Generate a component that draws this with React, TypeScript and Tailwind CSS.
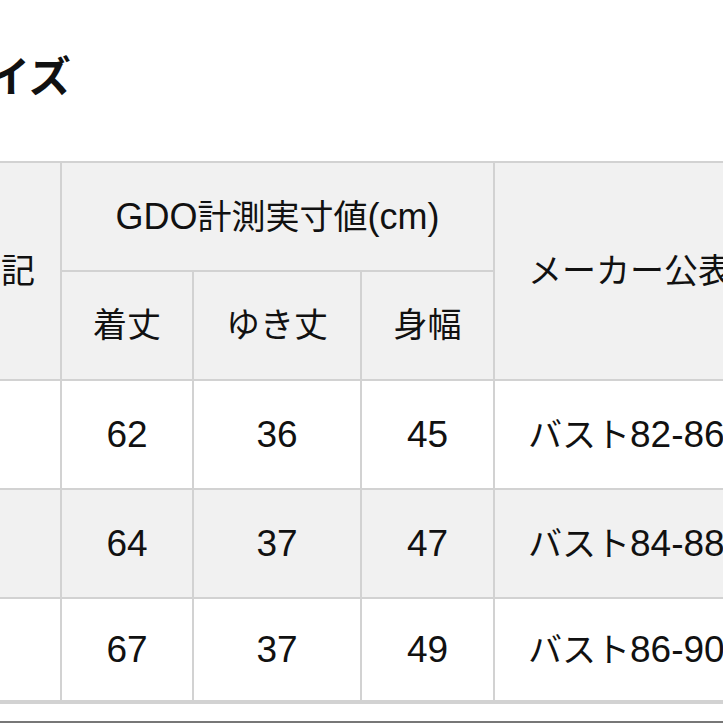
const rows = [
  { bg: "bg-white", a: "62", b: "36", c: "45", range: "82-86cm" },
  { bg: "bg-[#f1f1f1]", a: "64", b: "37", c: "47", range: "84-88cm" },
  { bg: "bg-white", a: "67", b: "37", c: "49", range: "86-90cm" },
];

export default function App() {
  const cell = "border-2 border-[#d2d2d2] text-center align-middle whitespace-nowrap";

  return (
    <div
      className="w-[723px] h-[723px] overflow-hidden bg-white text-[#111] border-b-2 border-[#777]"
      style={{ fontFamily: '"Liberation Sans", "Noto Sans CJK JP", sans-serif' }}
    >
      {/* Section title, cropped on the left */}
      <h2 className="ml-[-54px] pt-[57px] text-[42px] leading-none font-bold whitespace-nowrap">
        サイズ
      </h2>

      {/* Size table */}
      <table className="ml-[-60px] mt-[62px] w-[953px] table-fixed border-collapse text-[34px]">
        <colgroup>
          <col className="w-[120px]" />
          <col className="w-[132px]" />
          <col className="w-[168px]" />
          <col className="w-[133px]" />
          <col className="w-[400px]" />
        </colgroup>
        <thead className="bg-[#f1f1f1]">
          <tr className="h-[109px]">
            <th rowSpan={2} className={`${cell} font-normal`}>
              表記
            </th>
            <th colSpan={3} className={`${cell} font-normal`}>
              <span className="text-[36px]">GDO</span>計測実寸値<span className="text-[36px]">(cm)</span>
            </th>
            <th rowSpan={2} className={`${cell} font-normal text-left pl-[33px]`}>
              メーカー公表値<span className="text-[36px]">(cm)</span>
            </th>
          </tr>
          <tr className="h-[109px]">
            <th className={`${cell} font-normal`}>着丈</th>
            <th className={`${cell} font-normal`}>ゆき丈</th>
            <th className={`${cell} font-normal`}>身幅</th>
          </tr>
        </thead>
        <tbody>
          {rows.map((r, i) => {
            const last = i === rows.length - 1 ? "border-b-4" : "";
            return (
              <tr key={i} className={`${r.bg} ${last ? "h-[104px]" : "h-[109px]"}`}>
                <td className={`${cell} ${last}`}></td>
                <td className={`${cell} ${last} text-[37px]`}>{r.a}</td>
                <td className={`${cell} ${last} text-[37px]`}>{r.b}</td>
                <td className={`${cell} ${last} text-[37px]`}>{r.c}</td>
                <td className={`${cell} ${last} text-left pl-[33px]`}>
                  バスト<span className="text-[37px]">{r.range}</span>
                </td>
              </tr>
            );
          })}
        </tbody>
      </table>
    </div>
  );
}
